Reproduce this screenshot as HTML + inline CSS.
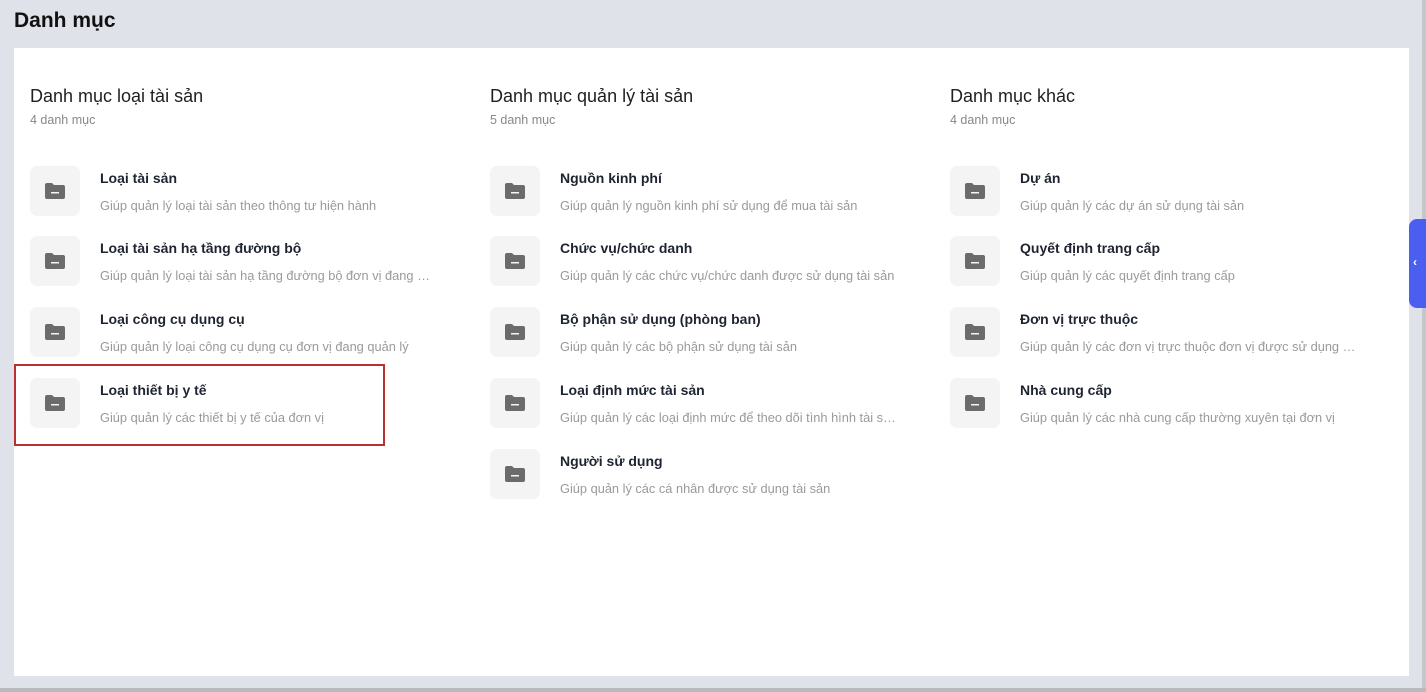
<!DOCTYPE html>
<html><head><meta charset="utf-8"><style>
*{margin:0;padding:0;box-sizing:border-box}
body{width:1426px;height:692px;background:#dfe2e8;font-family:"Liberation Sans",Arial,sans-serif;position:relative;overflow:hidden}
h1{position:absolute;left:14px;top:9px;font-size:21px;font-weight:bold;color:#111}
.panel{position:absolute;left:14px;top:48px;width:1395px;height:628px;background:#fff}
.col{position:absolute}
.ct{position:absolute;top:38px;font-size:18px;color:#1f1f1f;white-space:nowrap}
.cc{position:absolute;top:65px;font-size:12.5px;color:#888;white-space:nowrap}
.item{position:absolute;left:0;width:420px;height:50px}
.ic{position:absolute;left:0;top:0;width:50px;height:50px;background:#f4f4f5;border-radius:7px}
.ic svg{position:absolute;left:15px;top:17px}
.t{position:absolute;left:70px;top:4px;font-size:14px;font-weight:bold;color:#1e2430;white-space:nowrap}
.d{position:absolute;left:70px;top:32px;font-size:12.8px;color:#9a9a9a;white-space:nowrap;max-width:336px;overflow:hidden;text-overflow:ellipsis}
.red{position:absolute;left:14px;top:364px;width:371px;height:82px;border:2.5px solid #b8302f}
.tab{position:absolute;left:1409px;top:219px;width:17px;height:89px;background:#4a5ff0;border-radius:8px 0 0 8px}
.tab span{position:absolute;left:4px;top:36px;color:#fff;font-size:12px;font-weight:bold}
.bot{position:absolute;left:0;top:688px;width:1426px;height:4px;background:#b8bac0}
.rs{position:absolute;left:1422px;top:0;width:4px;height:692px;background:#c4c6cc}
</style></head><body>
<div class="rs"></div>
<h1>Danh mục</h1>
<div class="panel"></div>
<div class="bot"></div>
<div class="tab"><span>‹</span></div>

<div class="col" style="left:30px;top:48px"><div class="ct">Danh mục loại tài sản</div><div class="cc">4 danh mục</div></div>
<div class="col" style="left:490px;top:48px"><div class="ct">Danh mục quản lý tài sản</div><div class="cc">5 danh mục</div></div>
<div class="col" style="left:950px;top:48px"><div class="ct">Danh mục khác</div><div class="cc">4 danh mục</div></div>

<div class="item" style="left:30px;top:166px"><div class="ic"><svg width="20" height="16" viewBox="0 0 20 16"><path d="M0 2a2 2 0 0 1 2-2h5l2 2h9a2 2 0 0 1 2 2v10a2 2 0 0 1-2 2H2a2 2 0 0 1-2-2z" fill="#6b6b6b"/><rect x="6" y="9" width="8" height="1.5" fill="#f4f4f5"/></svg></div><div class="t">Loại tài sản</div><div class="d">Giúp quản lý loại tài sản theo thông tư hiện hành</div></div>
<div class="item" style="left:30px;top:236px"><div class="ic"><svg width="20" height="16" viewBox="0 0 20 16"><path d="M0 2a2 2 0 0 1 2-2h5l2 2h9a2 2 0 0 1 2 2v10a2 2 0 0 1-2 2H2a2 2 0 0 1-2-2z" fill="#6b6b6b"/><rect x="6" y="9" width="8" height="1.5" fill="#f4f4f5"/></svg></div><div class="t">Loại tài sản hạ tầng đường bộ</div><div class="d">Giúp quản lý loại tài sản hạ tầng đường bộ đơn vị đang quản lý</div></div>
<div class="item" style="left:30px;top:307px"><div class="ic"><svg width="20" height="16" viewBox="0 0 20 16"><path d="M0 2a2 2 0 0 1 2-2h5l2 2h9a2 2 0 0 1 2 2v10a2 2 0 0 1-2 2H2a2 2 0 0 1-2-2z" fill="#6b6b6b"/><rect x="6" y="9" width="8" height="1.5" fill="#f4f4f5"/></svg></div><div class="t">Loại công cụ dụng cụ</div><div class="d">Giúp quản lý loại công cụ dụng cụ đơn vị đang quản lý</div></div>
<div class="item" style="left:30px;top:378px"><div class="ic"><svg width="20" height="16" viewBox="0 0 20 16"><path d="M0 2a2 2 0 0 1 2-2h5l2 2h9a2 2 0 0 1 2 2v10a2 2 0 0 1-2 2H2a2 2 0 0 1-2-2z" fill="#6b6b6b"/><rect x="6" y="9" width="8" height="1.5" fill="#f4f4f5"/></svg></div><div class="t">Loại thiết bị y tế</div><div class="d">Giúp quản lý các thiết bị y tế của đơn vị</div></div>

<div class="item" style="left:490px;top:166px"><div class="ic"><svg width="20" height="16" viewBox="0 0 20 16"><path d="M0 2a2 2 0 0 1 2-2h5l2 2h9a2 2 0 0 1 2 2v10a2 2 0 0 1-2 2H2a2 2 0 0 1-2-2z" fill="#6b6b6b"/><rect x="6" y="9" width="8" height="1.5" fill="#f4f4f5"/></svg></div><div class="t">Nguồn kinh phí</div><div class="d">Giúp quản lý nguồn kinh phí sử dụng để mua tài sản</div></div>
<div class="item" style="left:490px;top:236px"><div class="ic"><svg width="20" height="16" viewBox="0 0 20 16"><path d="M0 2a2 2 0 0 1 2-2h5l2 2h9a2 2 0 0 1 2 2v10a2 2 0 0 1-2 2H2a2 2 0 0 1-2-2z" fill="#6b6b6b"/><rect x="6" y="9" width="8" height="1.5" fill="#f4f4f5"/></svg></div><div class="t">Chức vụ/chức danh</div><div class="d">Giúp quản lý các chức vụ/chức danh được sử dụng tài sản</div></div>
<div class="item" style="left:490px;top:307px"><div class="ic"><svg width="20" height="16" viewBox="0 0 20 16"><path d="M0 2a2 2 0 0 1 2-2h5l2 2h9a2 2 0 0 1 2 2v10a2 2 0 0 1-2 2H2a2 2 0 0 1-2-2z" fill="#6b6b6b"/><rect x="6" y="9" width="8" height="1.5" fill="#f4f4f5"/></svg></div><div class="t">Bộ phận sử dụng (phòng ban)</div><div class="d">Giúp quản lý các bộ phận sử dụng tài sản</div></div>
<div class="item" style="left:490px;top:378px"><div class="ic"><svg width="20" height="16" viewBox="0 0 20 16"><path d="M0 2a2 2 0 0 1 2-2h5l2 2h9a2 2 0 0 1 2 2v10a2 2 0 0 1-2 2H2a2 2 0 0 1-2-2z" fill="#6b6b6b"/><rect x="6" y="9" width="8" height="1.5" fill="#f4f4f5"/></svg></div><div class="t">Loại định mức tài sản</div><div class="d">Giúp quản lý các loại định mức để theo dõi tình hình tài sản</div></div>
<div class="item" style="left:490px;top:449px"><div class="ic"><svg width="20" height="16" viewBox="0 0 20 16"><path d="M0 2a2 2 0 0 1 2-2h5l2 2h9a2 2 0 0 1 2 2v10a2 2 0 0 1-2 2H2a2 2 0 0 1-2-2z" fill="#6b6b6b"/><rect x="6" y="9" width="8" height="1.5" fill="#f4f4f5"/></svg></div><div class="t">Người sử dụng</div><div class="d">Giúp quản lý các cá nhân được sử dụng tài sản</div></div>

<div class="item" style="left:950px;top:166px"><div class="ic"><svg width="20" height="16" viewBox="0 0 20 16"><path d="M0 2a2 2 0 0 1 2-2h5l2 2h9a2 2 0 0 1 2 2v10a2 2 0 0 1-2 2H2a2 2 0 0 1-2-2z" fill="#6b6b6b"/><rect x="6" y="9" width="8" height="1.5" fill="#f4f4f5"/></svg></div><div class="t">Dự án</div><div class="d">Giúp quản lý các dự án sử dụng tài sản</div></div>
<div class="item" style="left:950px;top:236px"><div class="ic"><svg width="20" height="16" viewBox="0 0 20 16"><path d="M0 2a2 2 0 0 1 2-2h5l2 2h9a2 2 0 0 1 2 2v10a2 2 0 0 1-2 2H2a2 2 0 0 1-2-2z" fill="#6b6b6b"/><rect x="6" y="9" width="8" height="1.5" fill="#f4f4f5"/></svg></div><div class="t">Quyết định trang cấp</div><div class="d">Giúp quản lý các quyết định trang cấp</div></div>
<div class="item" style="left:950px;top:307px"><div class="ic"><svg width="20" height="16" viewBox="0 0 20 16"><path d="M0 2a2 2 0 0 1 2-2h5l2 2h9a2 2 0 0 1 2 2v10a2 2 0 0 1-2 2H2a2 2 0 0 1-2-2z" fill="#6b6b6b"/><rect x="6" y="9" width="8" height="1.5" fill="#f4f4f5"/></svg></div><div class="t">Đơn vị trực thuộc</div><div class="d">Giúp quản lý các đơn vị trực thuộc đơn vị được sử dụng tài sản</div></div>
<div class="item" style="left:950px;top:378px"><div class="ic"><svg width="20" height="16" viewBox="0 0 20 16"><path d="M0 2a2 2 0 0 1 2-2h5l2 2h9a2 2 0 0 1 2 2v10a2 2 0 0 1-2 2H2a2 2 0 0 1-2-2z" fill="#6b6b6b"/><rect x="6" y="9" width="8" height="1.5" fill="#f4f4f5"/></svg></div><div class="t">Nhà cung cấp</div><div class="d">Giúp quản lý các nhà cung cấp thường xuyên tại đơn vị</div></div>

<div class="red"></div>
</body></html>
